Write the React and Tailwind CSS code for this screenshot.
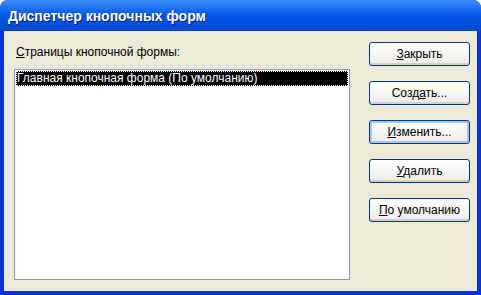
const BUTTONS = [
  { label: 'Закрыть', key: 'З', rest: 'акрыть' },
  { label: 'Создать...', pre: 'Созд', key: 'а', rest: 'ть...' },
  { label: 'Изменить...', key: 'И', rest: 'зменить...', focus: true },
  { label: 'Удалить', key: 'У', rest: 'далить' },
  { label: 'По умолчанию', key: 'П', rest: 'о умолчанию' },
]

function XpButton({ b }) {
  return (
    <button
      className={`w-[101px] h-[24px] rounded-[3px] border border-[#003c74] bg-gradient-to-b from-white to-[#ecebe6] text-[12px] text-black flex items-center justify-center ${
        b.focus ? 'shadow-[inset_0_0_0_2px_#a8c4f4]' : 'shadow-[inset_0_-2px_0_#d6d0c5]'
      }`}
    >
      <span>
        {b.pre}
        <span className="underline">{b.key}</span>
        {b.rest}
      </span>
    </button>
  )
}

export default function App() {
  return (
    <div className="w-[481px] h-[295px] bg-[#0831d9] rounded-t-[8px] flex flex-col font-['Liberation_Sans',sans-serif] overflow-hidden">
      <div className="h-[31px] shrink-0 bg-gradient-to-b from-[#3a8cf8] via-[#0058e6] to-[#0048d0] flex items-center pl-[8px] pt-[1px]">
        <span className="text-white font-bold text-[14px] [text-shadow:1px_1px_0_#0a1e6e]">
          Диспетчер кнопочных форм
        </span>
      </div>
      <div className="flex-1 mx-[4px] mb-[4px] bg-[#ece9d8] flex">
        <div className="flex flex-col pl-[10px] pt-[13px]">
          <div className="text-[12px] text-black h-[16px] leading-[16px] pl-[2px]">
            <span className="underline">С</span>траницы кнопочной формы:
          </div>
          <div className="mt-[9px] w-[336px] h-[211px] bg-white border border-[#7f9db9] p-[1px]">
            <div className="bg-black text-white text-[12px] h-[15px] leading-[15px] pl-[1px] outline-1 outline-dotted outline-white -outline-offset-1">
              Главная кнопочная форма (По умолчанию)
            </div>
          </div>
        </div>
        <div className="flex flex-col gap-[15px] pl-[19px] pt-[11px]">
          {BUTTONS.map((b) => (
            <XpButton key={b.label} b={b} />
          ))}
        </div>
      </div>
    </div>
  )
}
